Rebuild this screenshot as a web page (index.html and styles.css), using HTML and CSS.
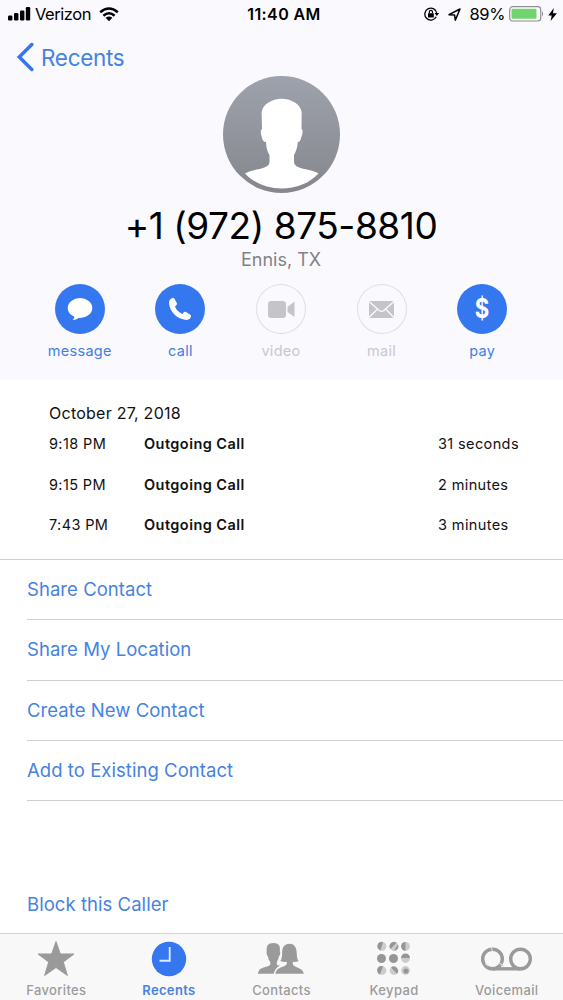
FILE: index.html
```html
<!DOCTYPE html>
<html lang="en">
<head>
<meta charset="utf-8">
<title>Recents</title>
<link rel="stylesheet" href="styles.css">
</head>
<body>
<div class="phone">
  <header class="head">
    <div class="status">
      <div class="status-left">
        <svg width="23" height="14" viewBox="0 0 23 14"><rect x="0" y="8.500" width="4.400" height="5" rx="1.200"/><rect x="6" y="6" width="4.400" height="7.500" rx="1.200"/><rect x="12" y="3.500" width="4.400" height="10" rx="1.200"/><rect x="17.800" y="0" width="4.400" height="13.500" rx="1.200"/></svg>
        <span class="carrier">Verizon</span>
        <svg class="wifi" width="20" height="15" viewBox="0 0 20 15"><g fill="none" stroke="#000" stroke-width="2.500"><path d="M1.200 5.300Q10-2.400 18.800 5.300"/><path d="M4.400 8.700Q10 3.700 15.600 8.700"/></g><path d="M6.600 10.800Q10 8 13.400 10.800L10 14.300Z"/></svg>
      </div>
      <div class="clock">11:40 AM</div>
      <div class="status-right">
        <svg width="16" height="14" viewBox="0 0 16 14"><path d="M12.200 9.800A6 6 0 1 1 12.800 6.500" fill="none" stroke="#000" stroke-width="1.300"/><path d="M10.500 6h4.700l-2.400 3z"/><rect x="4" y="6.200" width="5.800" height="4.300" rx=".6"/><path d="M5.300 6.500V5a1.600 1.600 0 0 1 3.200 0v1.500" fill="none" stroke="#000" stroke-width="1.200"/></svg>
        <svg class="loc" width="13" height="13" viewBox="0 0 13 13"><path d="M1 6.700L12 1L7.300 12.200L6.600 7z" fill="none" stroke="#000" stroke-width="1.500" stroke-linejoin="round"/></svg>
        <span class="pct">89%</span>
        <svg class="batt" width="36" height="16" viewBox="0 0 36 16"><rect x=".7" y=".7" width="31" height="14.300" rx="3" fill="#fff" stroke="#8d8d92" stroke-width="1.200"/><rect x="2.500" y="2.800" width="25" height="10" rx=".8" fill="#72d46f"/><path d="M33 5q2.300 2.800 0 5.600z" fill="#8d8d92"/></svg>
        <svg class="bolt" width="9" height="13" viewBox="0 0 9 13"><path d="M5.800 0L.3 7.400h3.400L2.600 13L8.900 5.300H5z"/></svg>
      </div>
    </div>
    <nav class="back">
      <svg width="18" height="30" viewBox="0 0 18 30"><path d="M15.800 2.500L3.300 15L15.800 27.500" fill="none" stroke="#3477ef" stroke-width="3.500" stroke-linecap="round"/></svg>
      <span>Recents</span>
    </nav>
    <svg class="avatar" width="118" height="118" viewBox="0 0 118 118">
      <defs><linearGradient id="shade" x1="0" y1="0" x2="0" y2="1"><stop offset="0" stop-color="#9ea2ac"/><stop offset="1" stop-color="#85878d"/></linearGradient></defs>
      <circle cx="58.500" cy="58.500" r="58.500" fill="url(#shade)"/>
      <path fill="#fff" d="M58.500 22.800C49 23 40 28 38.600 36L39 53C37.300 54 37.400 57 38.600 60.500C39.300 64.500 40.800 66 43 66C43.300 72 44.500 76 46.500 79V86C46 94 31 92 22 97.500C31 107 44 112.500 58.500 112.500S87 107 95.500 97.500C87 92 71.500 94 71 86V79C73.500 75 74.500 70 74.800 66C77 66 77.700 64 78.500 60.500C80 57 80 54 78.500 53L78.700 36C77 28 69 23 58.500 22.800Z"/>
    </svg>
    <h1 class="number">+1 (972) 875-8810</h1>
    <p class="place">Ennis, TX</p>
    <div class="actions">
      <div class="action"><span class="disc"><svg width="50" height="50" viewBox="0 0 50 50"><ellipse cx="25" cy="24" rx="12.300" ry="10" fill="#fff"/><path d="M19.500 30Q20 34 17.500 36Q22.500 36 25.500 32z" fill="#fff"/></svg></span><span>message</span></div>
      <div class="action"><span class="disc"><svg width="50" height="50" viewBox="0 0 50 50"><path fill="#fff" d="M17.600 13.900C15 14.700 13.600 17 14.100 20C15.200 28 22 34.600 30 35.800C33 36.200 35.500 35 36 32.500C36.200 31.500 35.800 31 35 30.500L31 28.100C30 27.600 29.200 27.800 28.600 28.600L27.500 30Q21.700 27.300 20 22.400L21.400 21.200C22.100 20.500 22.200 19.700 21.700 18.800L19.400 14.800C18.900 14 18.300 13.700 17.600 13.900Z"/></svg></span><span>call</span></div>
      <div class="action off"><span class="disc"><svg width="50" height="50" viewBox="0 0 50 50"><rect x="12" y="17" width="18" height="17" rx="3.300" fill="#c5c4c9"/><path d="M31.500 23L38.500 17.500V33L31.500 28z" fill="#c5c4c9"/></svg></span><span>video</span></div>
      <div class="action off"><span class="disc"><svg width="50" height="50" viewBox="0 0 50 50"><rect x="12" y="17" width="25" height="17" fill="#c5c4c9"/><path d="M12 17.500L22.200 26.500Q24.500 28.300 26.800 26.500L37 17.500M12 33.500L20.500 25M37 33.500L28.500 25" fill="none" stroke="#faf9fe" stroke-width="1.400"/></svg></span><span>mail</span></div>
      <div class="action"><span class="disc dollar"><b>$</b></span><span>pay</span></div>
    </div>
  </header>
  <section class="history">
    <h2>October 27, 2018</h2>
    <div class="log"><span>9:18 PM</span><b>Outgoing Call</b><span>31 seconds</span></div>
    <div class="log"><span>9:15 PM</span><b>Outgoing Call</b><span>2 minutes</span></div>
    <div class="log"><span>7:43 PM</span><b>Outgoing Call</b><span>3 minutes</span></div>
  </section>
  <main class="menu">
    <a class="item">Share Contact</a>
    <a class="item">Share My Location</a>
    <a class="item">Create New Contact</a>
    <a class="item">Add to Existing Contact</a>
    <a class="item block">Block this Caller</a>
  </main>
  <footer class="tabs">
    <div class="tab"><svg width="56" height="40" viewBox="0 0 56 40"><path d="M28 2.500L32.300 15H46L35.300 23L39.400 36.500L28 28.500L16.600 36.500L20.700 23L10 15H23.700Z" fill="#9a9a9a" stroke="#9a9a9a" stroke-linejoin="round"/></svg><span>Favorites</span></div>
    <div class="tab on"><svg width="56" height="40" viewBox="0 0 56 40"><circle cx="28" cy="20" r="17.200" fill="#3477ef"/><path d="M28.700 8V21.700H18.500" fill="none" stroke="#dce8ff" stroke-width="1.900"/></svg><span>Recents</span></div>
    <div class="tab"><svg width="56" height="40" viewBox="-2.300 0 56 40"><g fill="#9a9a9a"><path d="M18 4C12.500 4 10.800 7.500 11.500 12C10.800 13 11.700 17 12.700 17.500Q13 21 15 23V25.500C14 28 6.500 28 4 31Q3 32.500 2.500 34.700H18.300Q20.500 28 25 26.500Q21.500 26.500 21.500 25V23Q23.300 20 23.600 17.500C25 16 25.300 13 24.500 12C25.300 7 23.500 4 18 4Z"/><path d="M34.500 4.700C27.500 4.700 26.800 10 26.800 15C26.800 18 26.200 20.500 25 22Q28.500 23.300 31.500 22.800V25C30.800 27.500 24.500 28 22 30.500Q20.500 32.500 20 34.700H48.500Q48 32 46 30.500C43 28.500 38 27.500 37.500 25V22.800Q40.500 23.200 43.300 22Q41.500 20 41.500 15C41.500 9 39.500 4.700 34.500 4.700Z"/></g></svg><span>Contacts</span></div>
    <div class="tab"><svg width="56" height="40" viewBox="0 0 56 40"><g fill="#969696"><circle cx="15.500" cy="19.500" r="4.500"/><circle cx="27.500" cy="19.500" r="4.500"/></g><g fill="#ccc"><circle cx="16" cy="7.300" r="4.400"/><circle cx="28" cy="7.300" r="4.400"/><circle cx="39.500" cy="7.300" r="4.400"/><circle cx="39.500" cy="19.500" r="4.400"/><circle cx="16" cy="31.500" r="4.400"/><circle cx="28" cy="31.500" r="4.400"/><circle cx="39.500" cy="31.500" r="4.400"/></g><g fill="#969696"><path d="M17 3A4.400 4.400 0 0 0 14.500 11.500Z"/><path d="M30.500 3.700A4.400 4.400 0 0 0 24.500 10Z"/><path d="M28 11.700A4.400 4.400 0 0 0 32 5.500Z"/><path d="M39.500 2.900A4.400 4.400 0 0 0 39.500 11.700Z"/><path d="M35 19A4.500 4.500 0 0 1 44 19Z"/><path d="M17 27.200A4.400 4.400 0 0 0 14 35.500Z"/><path d="M25 28.500A4.400 4.400 0 0 1 31 34.800Z"/><circle cx="40" cy="32" r="2.600"/></g></svg><span>Keypad</span></div>
    <div class="tab"><svg width="56" height="40" viewBox="0 0 56 40"><g fill="none" stroke="#9a9a9a" stroke-width="3.400"><circle cx="13.500" cy="20" r="9.800"/><circle cx="41.500" cy="20" r="9.800"/><path d="M13.500 29.800H41.500"/></g><path d="M12 8L13.500 12M6 24.500L9.500 27M20.500 24l4 3" stroke="#d8d8d8" stroke-width="1.200"/></svg><span>Voicemail</span></div>
  </footer>
</div>
</body>
</html>
```
FILE: styles.css
```css
* { box-sizing: border-box; }
body { margin: 0; background: #fff; font-family: Inter, "Liberation Sans", sans-serif; color: #111; }
svg { display: block; flex: none; }
h1, h2, p { margin: 0; font-weight: 400; }
.phone { width: 563px; height: 1000px; display: flex; flex-direction: column; overflow: hidden; }
.head { height: 380px; flex: none; background: #faf9fe; display: flex; flex-direction: column; align-items: center; }
.status { width: 100%; height: 28px; padding: 0 6px 0 8px; display: grid; grid-template-columns: 1fr auto 1fr; align-items: center; font-size: 16.5px; color: #000; }
.status-left, .status-right { display: flex; align-items: center; }
.status-right { justify-content: flex-end; }
.carrier { margin-left: 4px; letter-spacing: -.45px; }
.wifi { margin-left: 8px; }
.clock { font-weight: 600; font-size: 16px; letter-spacing: .4px; margin-left: 3px; }
.loc { margin-left: 8px; }
.pct { margin-left: 9px; letter-spacing: -.4px; }
.batt { margin-left: 4px; }
.bolt { margin-left: 3px; }
.back { width: 100%; height: 48px; padding: 10px 0 0 16px; display: flex; gap: 7px; font-size: 22.5px; letter-spacing: -.3px; line-height: 40px; color: #4682e2; }
.back svg { margin-top: 4px; }
.number { font-size: 37px; letter-spacing: -.45px; line-height: 46px; margin: 9px 1px 0 0; color: #000; white-space: nowrap; }
.place { font-size: 18px; line-height: 22px; letter-spacing: 0; margin-right: 1px; color: #828187; }
.actions { width: 503px; display: grid; grid-template-columns: repeat(5, 1fr); margin: 13px 1px 0 0; }
.action { display: flex; flex-direction: column; align-items: center; gap: 7px; font-size: 14.5px; line-height: 20px; letter-spacing: .3px; color: #437fe2; }
.disc { width: 50px; height: 50px; border-radius: 50%; background: #3477ef; }
.off { color: #c9c8ce; }
.off .disc { background: transparent; box-shadow: inset 0 0 0 1px #dedde3; }
.dollar { color: #fff; font-size: 27px; line-height: 50px; text-align: center; letter-spacing: 0; }
.dollar b { display: block; transform: scaleX(.82); }
.history { height: 180px; flex: none; padding: 23px 0 0 49px; border-bottom: 1px solid #cfcfd1; }
.history h2 { font-size: 16px; line-height: 21px; letter-spacing: .25px; font-weight: 400; }
.log { display: grid; grid-template-columns: 95px 294px auto; font-size: 14.5px; line-height: 40px; height: 40.7px; letter-spacing: .38px; }
.log b { font-weight: 600; letter-spacing: .45px; }
.menu { flex: 1; min-height: 0; padding-left: 27px; }
.item { display: block; height: 60.3px; line-height: 59.5px; font-size: 18.5px; letter-spacing: .05px; color: #4682e2; border-bottom: 1px solid #cfcfd1; }
.block { margin-top: 74px; height: 57px; border: 0; }
.tabs { height: 67px; flex: none; background: #f8f8f8; border-top: 1px solid #d3d5d5; display: grid; grid-template-columns: repeat(5, 1fr); padding-top: 5px; }
.tab { display: flex; flex-direction: column; align-items: center; font-size: 13px; font-weight: 500; line-height: 16px; letter-spacing: .35px; color: #9b9b9b; gap: 3px; }
.on { color: #4682e2; font-weight: 600; }
```
